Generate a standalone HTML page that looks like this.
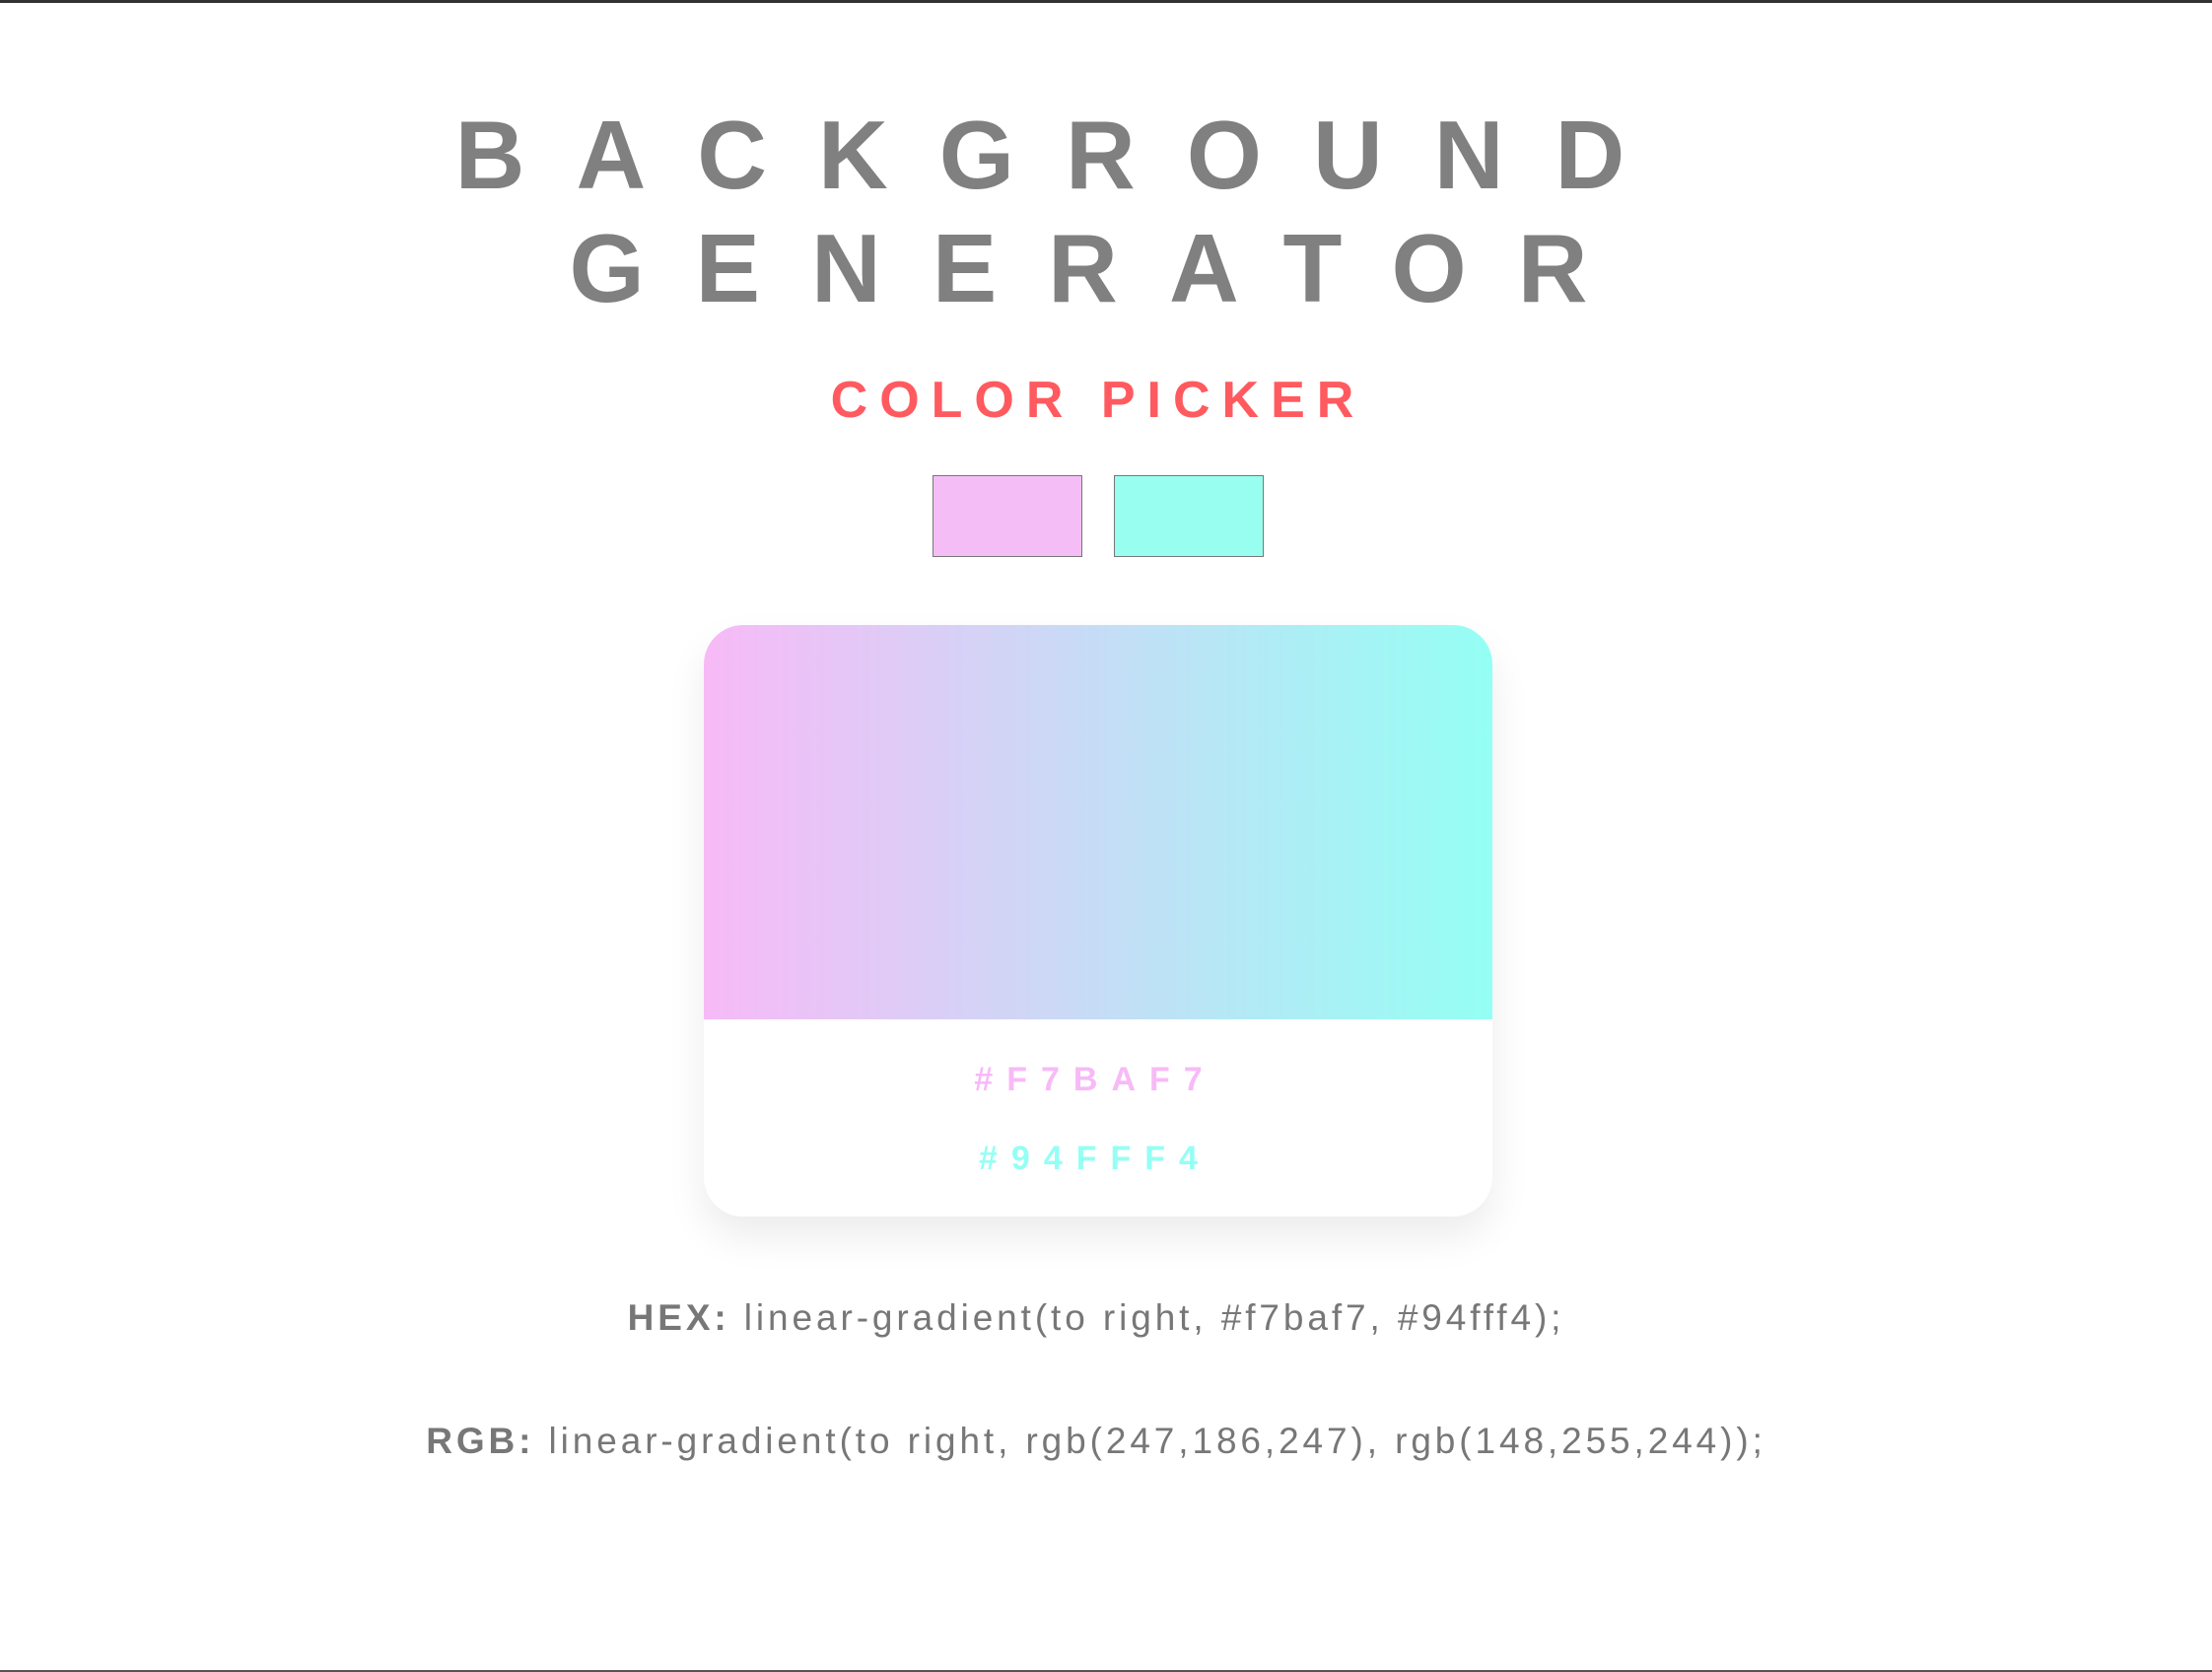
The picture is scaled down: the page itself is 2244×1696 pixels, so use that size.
<!DOCTYPE html>
<html><head><meta charset="utf-8"><style>
html,body{margin:0;padding:0;}
body{width:2244px;height:1696px;position:relative;background:#fff;overflow:hidden;font-family:"Liberation Sans",sans-serif;}
.top{position:absolute;left:0;right:0;top:0;height:3px;background:#333;}
.bot{position:absolute;left:0;right:0;bottom:0;height:2px;background:#555;}
.t{position:absolute;left:0;width:2244px;text-align:center;white-space:nowrap;}
h1{margin:0;font-weight:900;color:#808080;font-size:98px;letter-spacing:52px;line-height:1;}
.l1{top:108px;left:-93px;padding-left:52px;}
.l2{top:223px;left:-54px;padding-left:52px;}
.cp{top:376px;left:-8px;color:#ff5a5f;font-weight:bold;font-size:52px;letter-spacing:12px;}
.sw{position:absolute;top:482px;width:150px;height:81px;border:1px solid #777;}
.card{position:absolute;left:714px;top:634px;width:800px;height:600px;border-radius:40px;background:#fff;box-shadow:0 20px 40px rgba(0,0,0,0.08);overflow:hidden;}
.grad{height:400px;background:linear-gradient(to right,#f7baf7,#94fff4);}
.hx{position:absolute;left:-10px;width:800px;text-align:center;font-weight:900;font-size:34px;letter-spacing:14px;padding-left:14px;box-sizing:border-box;}
.code{color:#777;font-size:37px;letter-spacing:3.9px;left:-10px;}
.code b{color:#777;}
</style></head><body>
<div class="top"></div>
<h1 class="t l1">BACKGROUND</h1>
<h1 class="t l2">GENERATOR</h1>
<div class="t cp">COLOR PICKER</div>
<div class="sw" style="left:946px;background:#f5bdf5;"></div>
<div class="sw" style="left:1130px;background:#98fff0;"></div>
<div class="card"><div class="grad"></div>
<div class="hx" style="top:442px;color:#f7baf7;">#F7BAF7</div>
<div class="hx" style="top:522px;color:#94fff4;">#94FFF4</div>
</div>
<div class="t code" style="top:1316px;"><b>HEX:</b> linear-gradient(to right, #f7baf7, #94fff4);</div>
<div class="t code" style="top:1441px;"><b>RGB:</b> linear-gradient(to right, rgb(247,186,247), rgb(148,255,244));</div>
<div class="bot"></div>
</body></html>
